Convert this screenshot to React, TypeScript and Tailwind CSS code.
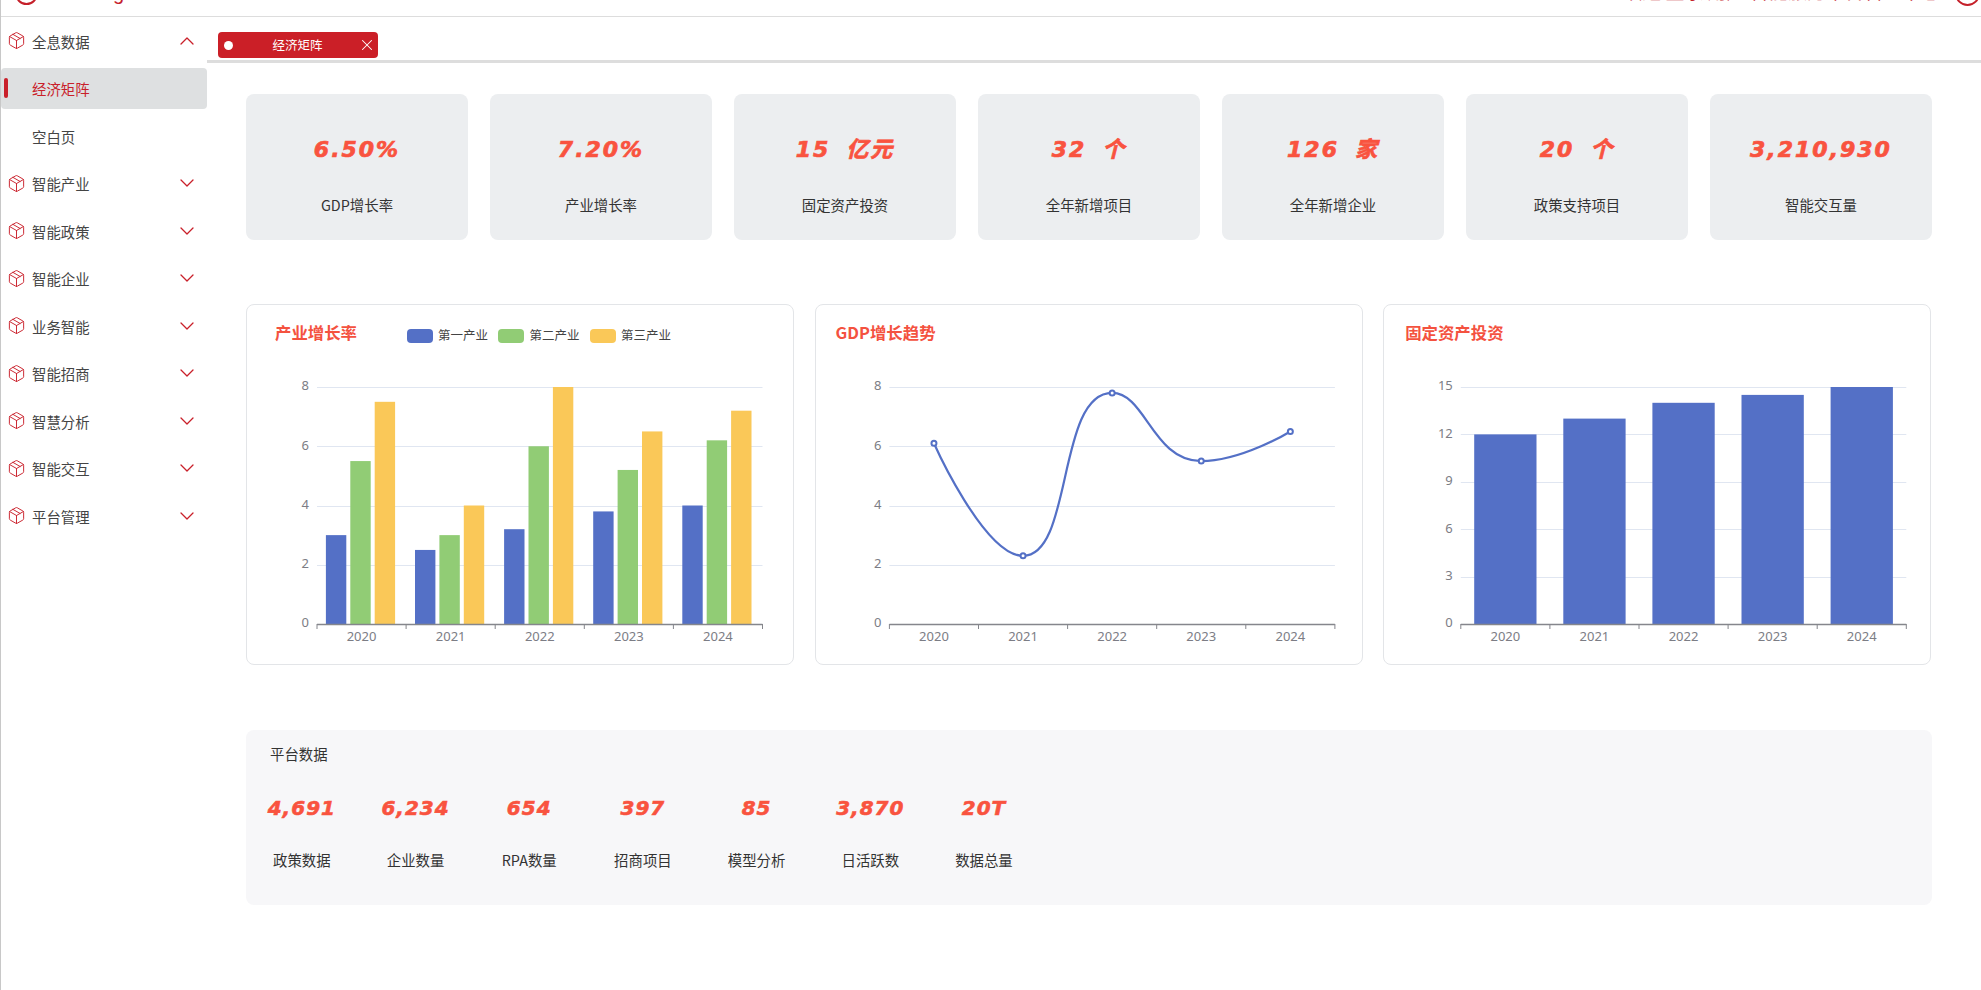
import { ChevronDown, ChevronUp, Package, X } from "lucide-react"

const BOTTOM = 624
const TOP = 387
const YEARS = ["2020", "2021", "2022", "2023", "2024"]
const CAT = 89.1

const menu = [
  { name: "智能产业" },
  { name: "智能政策" },
  { name: "智能企业" },
  { name: "业务智能" },
  { name: "智能招商" },
  { name: "智慧分析" },
  { name: "智能交互" },
  { name: "平台管理" },
]

const stats = [
  { value: "6.50%", label: "GDP增长率" },
  { value: "7.20%", label: "产业增长率" },
  { value: "15", unit: "亿元", label: "固定资产投资" },
  { value: "32", unit: "个", label: "全年新增项目" },
  { value: "126", unit: "家", label: "全年新增企业" },
  { value: "20", unit: "个", label: "政策支持项目" },
  { value: "3,210,930", label: "智能交互量" },
]

const platform = [
  { value: "4,691", label: "政策数据" },
  { value: "6,234", label: "企业数量" },
  { value: "654", label: "RPA数量" },
  { value: "397", label: "招商项目" },
  { value: "85", label: "模型分析" },
  { value: "3,870", label: "日活跃数" },
  { value: "20T", label: "数据总量" },
]

const industry = [
  { name: "第一产业", color: "#5470c6", data: [3, 2.5, 3.2, 3.8, 4] },
  { name: "第二产业", color: "#91cc75", data: [5.5, 3, 6, 5.2, 6.2] },
  { name: "第三产业", color: "#fac858", data: [7.5, 4, 8, 6.5, 7.2] },
]

const invest = [12, 13, 14, 14.5, 15]
const gdp = [6.1, 2.3, 7.8, 5.5, 6.5]

function yOf(v: number, max: number) {
  return BOTTOM - (v / max) * (BOTTOM - TOP)
}

// same smoothing as the chart lib: no overshoot past the data points
function smoothPath(pts: number[][]) {
  let d = `M${pts[0][0]} ${pts[0][1]}`
  let cp0 = pts[0]
  for (let i = 1; i < pts.length; i++) {
    const [x, y] = pts[i]
    const next = pts[i + 1]
    if (!next) {
      d += `C${cp0[0]} ${cp0[1]} ${x} ${y} ${x} ${y}`
      break
    }
    const prev = pts[i - 1]
    const d0 = Math.hypot(x - prev[0], y - prev[1])
    const d1 = Math.hypot(next[0] - x, next[1] - y)
    const r = d1 / (d0 + d1)
    const vx = (next[0] - prev[0]) * 0.5
    let vy = (next[1] - prev[1]) * 0.5
    if ((y - prev[1]) * (next[1] - y) <= 0) vy = 0
    const cp1 = [x - vx * (1 - r), y - vy * (1 - r)]
    d += `C${cp0[0]} ${cp0[1]} ${cp1[0]} ${cp1[1]} ${x} ${y}`
    cp0 = [x + vx * r, y + vy * r]
  }
  return d
}

function Axes({ x0, ticks, max }: { x0: number; ticks: number[]; max: number }) {
  const x1 = x0 + CAT * 5
  return (
    <g className="text-[13px] font-['Noto_Sans',sans-serif]" fill="#7c7d85">
      {ticks.map((t) => (
        <g key={t}>
          {t > 0 && <line x1={x0} x2={x1} y1={Math.round(yOf(t, max)) + 0.5} y2={Math.round(yOf(t, max)) + 0.5} stroke="#e0e6f1" />}
          <text x={x0 - 8} y={yOf(t, max)} textAnchor="end" dominantBaseline="middle">{t}</text>
        </g>
      ))}
      {YEARS.map((year, i) => (
        <text key={year} x={x0 + CAT * (i + 0.5)} y={BOTTOM + 14} textAnchor="middle" dominantBaseline="middle">{year}</text>
      ))}
    </g>
  )
}

function AxisLine({ x0 }: { x0: number }) {
  const x1 = x0 + CAT * 5
  return (
    <g stroke="#85868c">
      <line x1={x0} x2={x1} y1={BOTTOM + 0.5} y2={BOTTOM + 0.5} strokeWidth={1.5} />
      {[0, 1, 2, 3, 4, 5].map((i) => (
        <line key={i} x1={x0 + CAT * i} x2={x0 + CAT * i} y1={BOTTOM} y2={BOTTOM + 5} />
      ))}
    </g>
  )
}

function ChartSvg({ left, children }: { left: number; children: React.ReactNode }) {
  return (
    <svg viewBox={`${left} 367 546 297`} className="w-[546px] h-[297px]">
      {children}
    </svg>
  )
}

function IndustryChart() {
  const x0 = 317
  return (
    <ChartSvg left={247}>
      <Axes x0={x0} ticks={[0, 2, 4, 6, 8]} max={8} />
      {industry.map((s, k) =>
        s.data.map((v, i) => (
          <rect key={s.name + i} x={x0 + CAT * i + 8.9 + k * 24.4} y={yOf(v, 8)} width={20.4} height={BOTTOM - yOf(v, 8)} fill={s.color} />
        ))
      )}
      <AxisLine x0={x0} />
    </ChartSvg>
  )
}

function GdpChart() {
  const x0 = 889
  const pts = gdp.map((v, i) => [x0 + CAT * (i + 0.5), yOf(v, 8)])
  return (
    <ChartSvg left={815.6}>
      <Axes x0={x0} ticks={[0, 2, 4, 6, 8]} max={8} />
      <AxisLine x0={x0} />
      <path d={smoothPath(pts)} fill="none" stroke="#5470c6" strokeWidth={2.2} />
      {pts.map(([x, y]) => (
        <circle key={x} cx={x} cy={y} r={2.5} fill="#fff" stroke="#5470c6" strokeWidth={2} />
      ))}
    </ChartSvg>
  )
}

function InvestChart() {
  const x0 = 1461
  return (
    <ChartSvg left={1384.2}>
      <Axes x0={x0} ticks={[0, 3, 6, 9, 12, 15]} max={15} />
      {invest.map((v, i) => (
        <rect key={i} x={x0 + CAT * i + 13.4} y={yOf(v, 15)} width={62.3} height={BOTTOM - yOf(v, 15)} fill="#5470c6" />
      ))}
      <AxisLine x0={x0} />
    </ChartSvg>
  )
}

function MenuRow({ name, open }: { name: string; open?: boolean }) {
  return (
    <div className="h-[47.5px] flex items-center pl-[6px] pr-[8px] text-[14.4px] text-[#444]">
      <Package size={19} strokeWidth={1.2} className="text-[#c9202a] shrink-0" />
      <span className="ml-[6px] pt-[2px]">{name}</span>
      {open
        ? <ChevronUp size={24} strokeWidth={1.3} className="ml-auto text-[#c9202a]" />
        : <ChevronDown size={24} strokeWidth={1.3} className="ml-auto text-[#c9202a]" />}
    </div>
  )
}

function Sidebar() {
  return (
    <aside className="w-[206px] shrink-0">
      <MenuRow name="全息数据" open />
      <div className="h-[47.5px] flex items-center">
        <div className="h-[41px] w-full bg-[#dee0e1] rounded-[4px] flex items-center text-[14.4px] text-[#c9202a]">
          <div className="ml-[3px] w-[4px] h-[20px] rounded-[2px] bg-[#c9202a]" />
          <span className="ml-[24px] pt-[2px]">经济矩阵</span>
        </div>
      </div>
      <div className="h-[47.5px] flex items-center pl-[31px] pt-[2px] text-[14.4px] text-[#444]">空白页</div>
      {menu.map((m) => (
        <MenuRow key={m.name} name={m.name} />
      ))}
    </aside>
  )
}

function StatCard({ value, unit, label }: { value: string; unit?: string; label: string }) {
  return (
    <div className="h-[146px] rounded-[8px] bg-[#eceef0] flex flex-col items-center pt-[41px]">
      <div className="h-[30px] flex items-center leading-[30px] text-[22px] font-bold italic tracking-[2px] text-[#f9533f] [-webkit-text-stroke:0.7px_#f9533f] font-['DejaVu_Sans','Noto_Sans_CJK_SC',sans-serif]">
        <span>{value}</span>
        {unit && <span className="ml-[16px]">{unit}</span>}
      </div>
      <div className="mt-[30px] text-[14.4px] leading-[20px] text-[#333]">{label}</div>
    </div>
  )
}

function Legend() {
  return (
    <div className="flex mt-[6px] ml-[50px]">
      {industry.map((s) => (
        <div key={s.name} className="w-[91.5px] h-[17px] flex items-center text-[12.5px] text-[#444]">
          <div className="w-[26px] h-[14px] rounded-[4px] shrink-0" style={{ backgroundColor: s.color }} />
          <span className="ml-[5px]">{s.name}</span>
        </div>
      ))}
    </div>
  )
}

function ChartCard({ title, pad, legend, children }: { title: string; pad: string; legend?: boolean; children: React.ReactNode }) {
  return (
    <div className="h-[361px] rounded-[8px] border border-[#e3e5e8] bg-white">
      <div className={`h-[62px] flex items-start pt-[16px] ${pad}`}>
        <h3 className="text-[16.4px] leading-[22px] font-semibold text-[#f4523f]">{title}</h3>
        {legend && <Legend />}
      </div>
      {children}
    </div>
  )
}

export default function App() {
  return (
    <div className="h-[990px] overflow-hidden flex flex-col bg-white border-l border-[#c8c8c8] font-['Noto_Sans_CJK_SC','Noto_Sans',sans-serif]">
      <header className="h-[17px] shrink-0 border-b border-[#ddd] flex items-end justify-between overflow-hidden text-[#c5202a]">
        <div className="flex items-end pl-[14px] mb-[11px]">
          <div className="w-[23px] h-[23px] rounded-full border-2 border-[#c5202a]" />
          <span className="ml-[6px] -mb-[2px] text-[20px] leading-[28px] font-['Liberation_Sans',sans-serif]">Smarting</span>
        </div>
        <div className="flex items-end pr-[1px] mb-[10px]">
          <span className="text-[19px] leading-[28px] whitespace-nowrap mb-[1px]">欢迎 登录 用户 智能服务平台管理中心</span>
          <div className="ml-[15px] w-[25px] h-[25px] rounded-full border-2 border-[#c5202a]" />
        </div>
      </header>
      <div className="flex flex-1 min-h-0">
        <Sidebar />
        <main className="flex-1 min-w-0">
          <div className="mt-[15px] h-[31px] border-b-[3px] border-[#ddd] pl-[11px]">
            <div className="w-[160px] h-[26px] rounded-[4px] bg-[#cb1f27] text-white flex items-center pl-[6px] pr-[2px]">
              <div className="w-[9px] h-[9px] rounded-full bg-white shrink-0" />
              <span className="flex-1 pl-[4px] text-center text-[12.5px]">经济矩阵</span>
              <X size={18} strokeWidth={1.4} className="shrink-0" />
            </div>
          </div>
          <div className="pl-[39px] pr-[49px] pt-[31px]">
            <div className="grid grid-cols-7 gap-[22px]">
              {stats.map((s) => (
                <StatCard key={s.label} {...s} />
              ))}
            </div>
            <div className="mt-[64px] grid grid-cols-[repeat(3,548px)] gap-[20.6px]">
              <ChartCard title="产业增长率" pad="pl-[28px]" legend>
                <IndustryChart />
              </ChartCard>
              <ChartCard title="GDP增长趋势" pad="pl-[20px]">
                <GdpChart />
              </ChartCard>
              <ChartCard title="固定资产投资" pad="pl-[21px]">
                <InvestChart />
              </ChartCard>
            </div>
            <section className="mt-[65px] h-[175px] rounded-[8px] bg-[#f7f7f9] pt-[14px]">
              <div className="pl-[24px] text-[14.4px] leading-[20px] text-[#333]">平台数据</div>
              <div className="mt-[29px] flex -ml-px">
                {platform.map((p) => (
                  <div key={p.label} className="w-[113.7px] flex flex-col items-center">
                    <div className="h-[30px] leading-[30px] text-[20px] font-bold italic tracking-[1px] text-[#f9533f] [-webkit-text-stroke:0.6px_#f9533f] font-['DejaVu_Sans',sans-serif]">{p.value}</div>
                    <div className="mt-[27px] text-[14.4px] leading-[20px] text-[#333]">{p.label}</div>
                  </div>
                ))}
              </div>
            </section>
          </div>
        </main>
      </div>
    </div>
  )
}
